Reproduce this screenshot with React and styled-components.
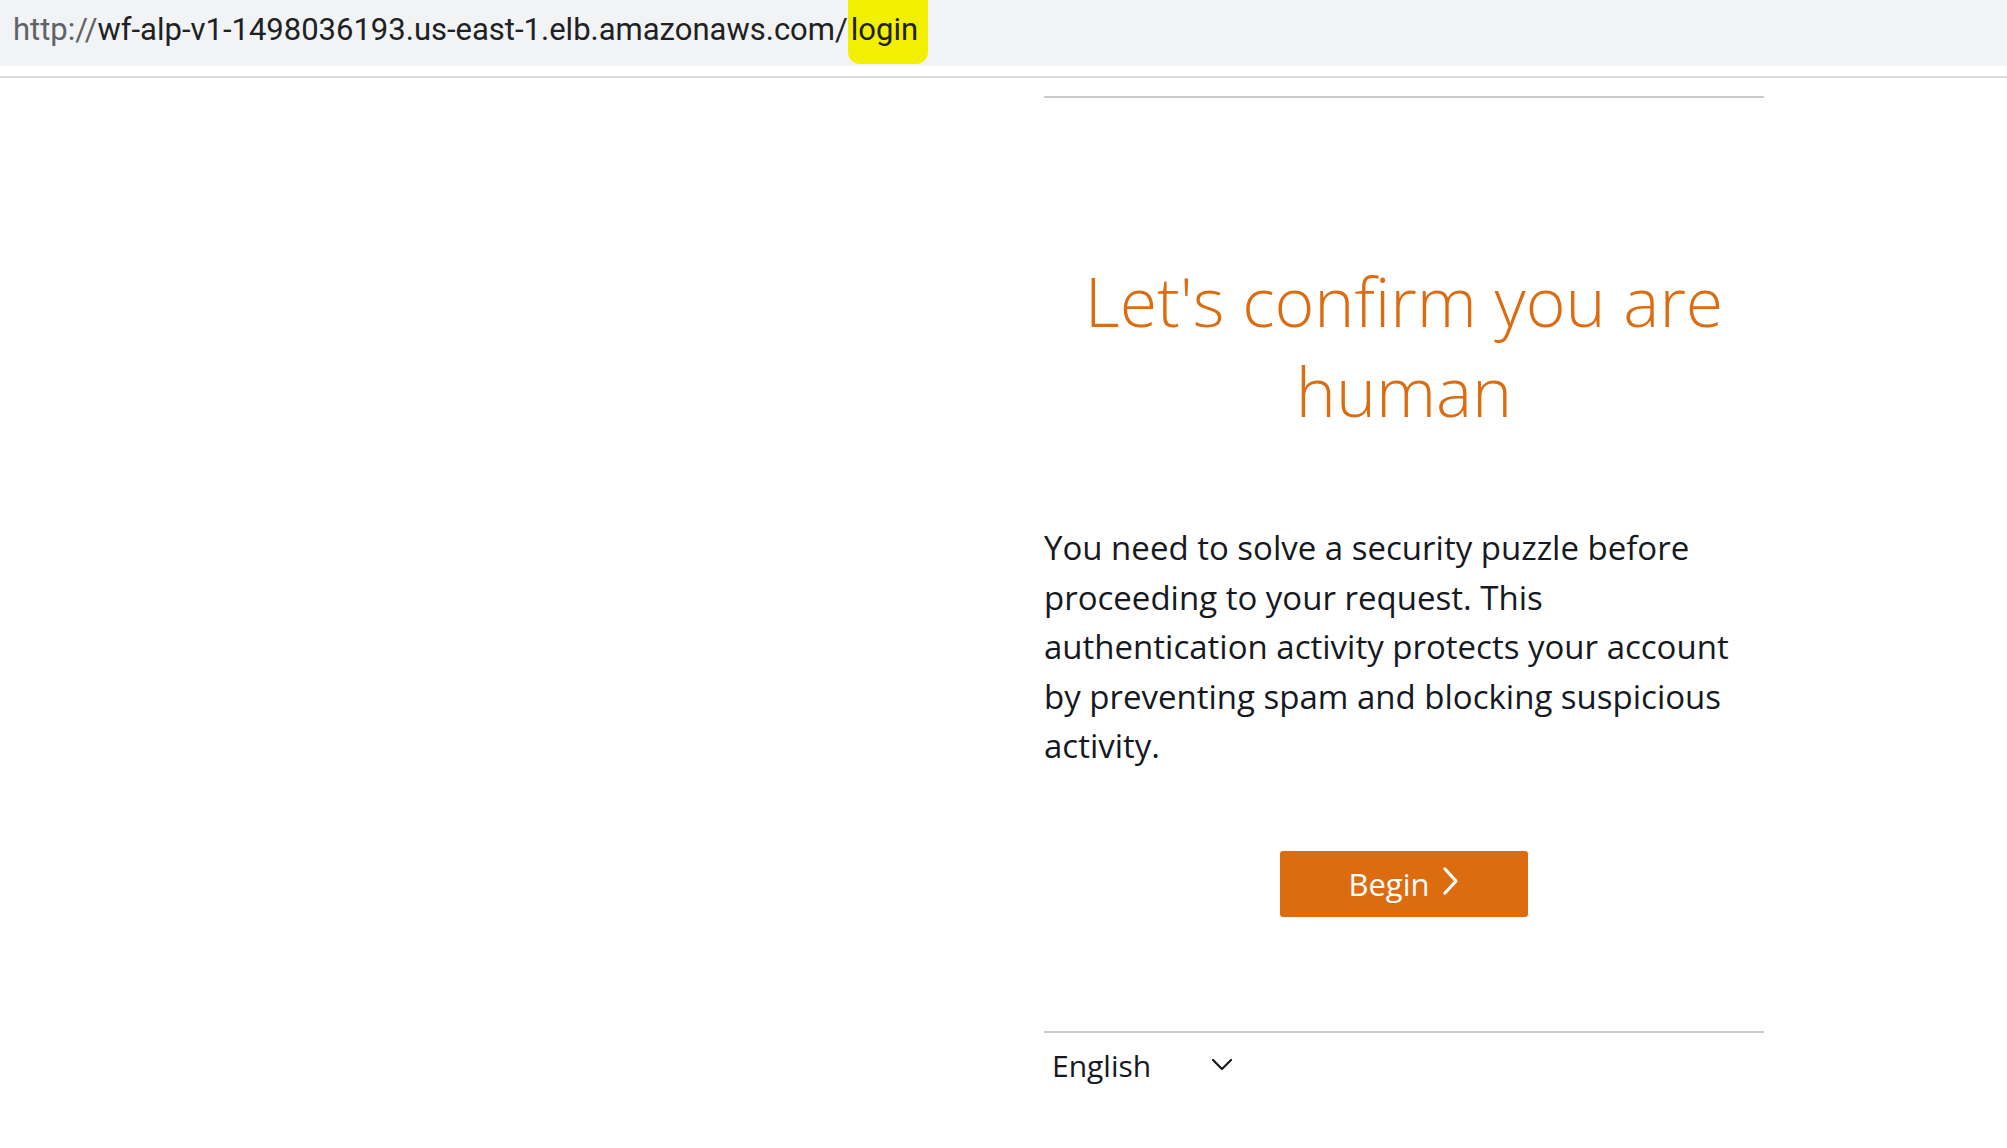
import React from "react";
import styled, { createGlobalStyle } from "styled-components";

const GlobalStyle = createGlobalStyle`
  html, body {
    margin: 0;
    padding: 0;
    background: #ffffff;
  }
  body {
    font-family: "Open Sans", "Liberation Sans", sans-serif;
  }
`;

const App = () => {
  return (
    <>
      <GlobalStyle />
      <AddressBar>
        <UrlText>
          <Scheme>http://</Scheme>
          wf-alp-v1-1498036193.us-east-1.elb.amazonaws.com/
          <Marked>login</Marked>
        </UrlText>
      </AddressBar>
      <BarRule />
      <Page>
        <Column>
          <Rule />
          <Title>Let's confirm you are human</Title>
          <Body>
            You need to solve a security puzzle before proceeding to your
            request. This authentication activity protects your account by
            preventing spam and blocking suspicious activity.
          </Body>
          <ButtonRow>
            <BeginButton>
              Begin
              <svg width="18" height="30" viewBox="0 0 18 30" fill="none">
                <path
                  d="M3 3 L14 15 L3 27"
                  stroke="#ffffff"
                  strokeWidth="3.2"
                  strokeLinecap="round"
                  strokeLinejoin="round"
                />
              </svg>
            </BeginButton>
          </ButtonRow>
          <FooterRule />
          <LangSelect>
            <span>English</span>
            <svg width="22" height="14" viewBox="0 0 22 14" fill="none">
              <path
                d="M2 2 L11 11 L20 2"
                stroke="#16191f"
                strokeWidth="2.2"
                strokeLinecap="round"
                strokeLinejoin="round"
              />
            </svg>
          </LangSelect>
        </Column>
      </Page>
    </>
  );
};

export default App;

const AddressBar = styled.div`
  height: 66px;
  background: #f1f3f4;
  display: flex;
  align-items: center;
  padding-left: 13px;
`;

const UrlText = styled.div`
  margin-top: -8px;
  font-family: Roboto, "Liberation Sans", sans-serif;
  font-size: 31px;
  color: #202124;
  white-space: nowrap;
`;

const Scheme = styled.span`
  color: #5f6368;
`;

const Marked = styled.span`
  background: #f2f000;
  border-radius: 12px;
  padding: 20px 10px 16px 3px;
`;

const BarRule = styled.div`
  margin-top: 10px;
  height: 2px;
  background: #dadce0;
`;

const Page = styled.main`
  display: grid;
  grid-template-columns: 1044px 720px;
`;

const Column = styled.div`
  grid-column: 2;
  display: flex;
  flex-direction: column;
`;

const Rule = styled.hr`
  margin: 18px 0 0;
  border: none;
  height: 2px;
  background: #cccccc;
`;

const Title = styled.h1`
  margin: 158px 0 0;
  padding: 0 28px;
  text-align: center;
  font-size: 68px;
  font-weight: 300;
  font-stretch: 92%;
  line-height: 90px;
  color: #dd6b10;
`;

const Body = styled.p`
  margin: 87px 0 0;
  font-size: 33px;
  font-weight: 380;
  font-stretch: 100%;
  line-height: 49.5px;
  color: #16191f;
`;

const ButtonRow = styled.div`
  display: flex;
  justify-content: center;
  margin-top: 80px;
`;

const BeginButton = styled.button`
  width: 248px;
  height: 66px;
  display: flex;
  align-items: center;
  justify-content: center;
  gap: 12px;
  border: none;
  border-radius: 3px;
  background: #dd6b10;
  color: #ffffff;
  font-family: "Open Sans", "Liberation Sans", sans-serif;
  font-size: 31px;
  font-stretch: 90%;
  cursor: pointer;
  svg {
    margin-top: -6px;
  }
`;

const FooterRule = styled.hr`
  margin: 114px 0 0;
  border: none;
  height: 2px;
  background: #cccccc;
`;

const LangSelect = styled.div`
  display: flex;
  align-items: center;
  gap: 60px;
  margin-top: 12px;
  padding-left: 8px;
  font-size: 30px;
  font-stretch: 90%;
  color: #16191f;
`;
